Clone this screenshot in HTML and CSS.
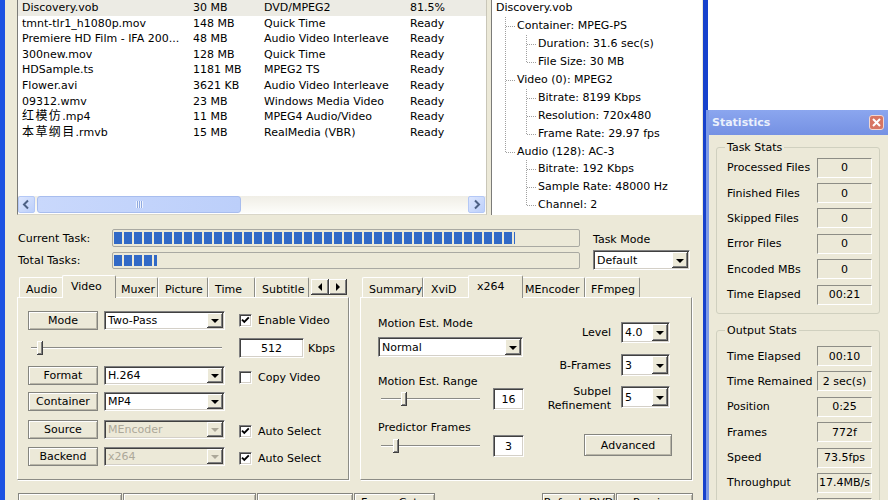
FILE: index.html
```html
<!DOCTYPE html>
<html>
<head>
<meta charset="utf-8">
<link rel="stylesheet" href="styles.css">
</head>
<body>
<div class="main">
  <div class="top">
    <div class="list">
      <div class="rows">
        <div class="row sel"><span class="c1">Discovery.vob</span><span class="c2">30 MB</span><span class="c3">DVD/MPEG2</span><span class="c4">81.5%</span></div>
        <div class="row"><span class="c1">tmnt-tlr1_h1080p.mov</span><span class="c2">148 MB</span><span class="c3">Quick Time</span><span class="c4">Ready</span></div>
        <div class="row"><span class="c1">Premiere HD Film - IFA 200...</span><span class="c2">48 MB</span><span class="c3">Audio Video Interleave</span><span class="c4">Ready</span></div>
        <div class="row"><span class="c1">300new.mov</span><span class="c2">128 MB</span><span class="c3">Quick Time</span><span class="c4">Ready</span></div>
        <div class="row"><span class="c1">HDSample.ts</span><span class="c2">1181 MB</span><span class="c3">MPEG2 TS</span><span class="c4">Ready</span></div>
        <div class="row"><span class="c1">Flower.avi</span><span class="c2">3621 KB</span><span class="c3">Audio Video Interleave</span><span class="c4">Ready</span></div>
        <div class="row"><span class="c1">09312.wmv</span><span class="c2">23 MB</span><span class="c3">Windows Media Video</span><span class="c4">Ready</span></div>
        <div class="row"><span class="c1"><span class="cjk">红模仿</span>.mp4</span><span class="c2">11 MB</span><span class="c3">MPEG4 Audio/Video</span><span class="c4">Ready</span></div>
        <div class="row"><span class="c1"><span class="cjk">本草纲目</span>.rmvb</span><span class="c2">15 MB</span><span class="c3">RealMedia (VBR)</span><span class="c4">Ready</span></div>
      </div>
      <div class="hscroll">
        <span class="sbtn"><svg width="15" height="15" viewBox="0 0 15 15"><path d="M9 3.5 L5 7.5 L9 11.5" fill="none" stroke="#4d6185" stroke-width="2"/></svg></span>
        <span class="thumb"><span class="grip"></span></span>
        <span class="spacer"></span>
        <span class="sbtn"><svg width="15" height="15" viewBox="0 0 15 15"><path d="M6 3.5 L10 7.5 L6 11.5" fill="none" stroke="#4d6185" stroke-width="2"/></svg></span>
      </div>
    </div>
    <div class="tree">
      <div class="tree-inner">
        <div class="trow"><span class="tt">Discovery.vob</span></div>
        <div class="trow"><span class="g tee"></span><span class="tt">Container: MPEG-PS</span></div>
        <div class="trow"><span class="g pipe"></span><span class="g tee"></span><span class="tt">Duration: 31.6 sec(s)</span></div>
        <div class="trow"><span class="g pipe"></span><span class="g ell"></span><span class="tt">File Size: 30 MB</span></div>
        <div class="trow"><span class="g tee"></span><span class="tt">Video (0): MPEG2</span></div>
        <div class="trow"><span class="g pipe"></span><span class="g tee"></span><span class="tt">Bitrate: 8199 Kbps</span></div>
        <div class="trow"><span class="g pipe"></span><span class="g tee"></span><span class="tt">Resolution: 720x480</span></div>
        <div class="trow"><span class="g pipe"></span><span class="g ell"></span><span class="tt">Frame Rate: 29.97 fps</span></div>
        <div class="trow"><span class="g ell"></span><span class="tt">Audio (128): AC-3</span></div>
        <div class="trow"><span class="g"></span><span class="g tee"></span><span class="tt">Bitrate: 192 Kbps</span></div>
        <div class="trow"><span class="g"></span><span class="g tee"></span><span class="tt">Sample Rate: 48000 Hz</span></div>
        <div class="trow"><span class="g"></span><span class="g ell"></span><span class="tt">Channel: 2</span></div>
      </div>
    </div>
  </div>

  <div class="prog">
    <span class="plabel">Current Task:</span>
    <div class="bar"><div class="fill" style="width:401px"></div></div>
    <span></span>
    <span class="modelabel">Task Mode</span>
    <span class="plabel">Total Tasks:</span>
    <div class="bar"><div class="fill" style="width:43px"></div></div>
    <span></span>
    <div class="combo modecombo"><span class="ctext">Default</span><span class="arr"><i class="tri"></i></span></div>
  </div>

  <div class="tabs">
    <div class="tgroup">
      <div class="tstrip">
        <span class="tab w-audio">Audio</span>
        <span class="tab on w-video">Video</span>
        <span class="tab w-muxer">Muxer</span>
        <span class="tab w-picture">Picture</span>
        <span class="tab w-time">Time</span>
        <span class="tab w-subtitle">Subtitle</span>
        <span class="tscroll"><span class="tsbtn"><i class="tl"></i></span><span class="tsbtn"><i class="tr"></i></span></span>
      </div>
      <div class="panel lpanel">
        <div class="frow">
          <span class="btn fbtn">Mode</span>
          <div class="combo fcombo"><span class="ctext">Two-Pass</span><span class="arr"><i class="tri"></i></span></div>
          <span class="chkwrap"><span class="chk"><svg width="11" height="11" viewBox="0 0 11 11"><path d="M2 4.6 L4.3 6.9 L8.8 2.4" fill="none" stroke="#000" stroke-width="1.9"/></svg></span>Enable Video</span>
        </div>
        <div class="frow srow2">
          <div class="slider lslider"><span class="sthumb"></span></div>
          <span class="edit kbps">512</span><span class="unit">Kbps</span>
        </div>
        <div class="frow r3">
          <span class="btn fbtn">Format</span>
          <div class="combo fcombo"><span class="ctext">H.264</span><span class="arr"><i class="tri"></i></span></div>
          <span class="chkwrap low"><span class="chk"></span>Copy Video</span>
        </div>
        <div class="frow r4">
          <span class="btn fbtn">Container</span>
          <div class="combo fcombo"><span class="ctext">MP4</span><span class="arr"><i class="tri"></i></span></div>
        </div>
        <div class="frow r5">
          <span class="btn fbtn">Source</span>
          <div class="combo fcombo dis"><span class="ctext">MEncoder</span><span class="arr"><i class="tri"></i></span></div>
          <span class="chkwrap low"><span class="chk"><svg width="11" height="11" viewBox="0 0 11 11"><path d="M2 4.6 L4.3 6.9 L8.8 2.4" fill="none" stroke="#000" stroke-width="1.9"/></svg></span>Auto Select</span>
        </div>
        <div class="frow r6">
          <span class="btn fbtn">Backend</span>
          <div class="combo fcombo dis"><span class="ctext">x264</span><span class="arr"><i class="tri"></i></span></div>
          <span class="chkwrap low"><span class="chk"><svg width="11" height="11" viewBox="0 0 11 11"><path d="M2 4.6 L4.3 6.9 L8.8 2.4" fill="none" stroke="#000" stroke-width="1.9"/></svg></span>Auto Select</span>
        </div>
      </div>
    </div>

    <div class="tgroup">
      <div class="tstrip">
        <span class="tab w-summary">Summary</span>
        <span class="tab w-xvid">XviD</span>
        <span class="tab on w-x264">x264</span>
        <span class="tab w-mencoder">MEncoder</span>
        <span class="tab w-ffmpeg">FFmpeg</span>
      </div>
      <div class="panel rpanel">
        <div class="rleft">
          <span class="lbl l1">Motion Est. Mode</span>
          <div class="combo mcombo"><span class="ctext">Normal</span><span class="arr"><i class="tri"></i></span></div>
          <span class="lbl l2">Motion Est. Range</span>
          <div class="srow sr1">
            <div class="slider rslider"><span class="sthumb t16"></span></div>
            <span class="edit small">16</span>
          </div>
          <span class="lbl l3">Predictor Frames</span>
          <div class="srow sr2">
            <div class="slider rslider"><span class="sthumb t3"></span></div>
            <span class="edit small">3</span>
          </div>
        </div>
        <div class="rright">
          <div class="prow p1"><span class="plbl">Level</span><div class="combo scombo"><span class="ctext">4.0</span><span class="arr"><i class="tri"></i></span></div></div>
          <div class="prow p2"><span class="plbl">B-Frames</span><div class="combo scombo"><span class="ctext">3</span><span class="arr"><i class="tri"></i></span></div></div>
          <div class="prow p3"><span class="plbl two">Subpel<br>Refinement</span><div class="combo scombo"><span class="ctext">5</span><span class="arr"><i class="tri"></i></span></div></div>
          <span class="btn advbtn">Advanced</span>
        </div>
      </div>
    </div>
  </div>

  <div class="bottom">
    <span class="btn bb b1"></span>
    <span class="btn bb b2"></span>
    <span class="btn bb b3"></span>
    <span class="btn bb b4">Frame Cut...</span>
    <span class="bspacer"></span>
    <span class="btn bb b5">Refresh DVD</span>
    <span class="btn bb b6">Preview</span>
  </div>
</div>

<div class="stats">
  <div class="title"><span class="ttext">Statistics</span><span class="close"><svg width="9" height="9" viewBox="0 0 9 9"><path d="M1 1 L8 8 M8 1 L1 8" stroke="#fff" stroke-width="2"/></svg></span></div>
  <div class="sbody">
    <fieldset class="grp g1">
      <legend>Task Stats</legend>
      <div class="st"><span class="sl">Processed Files</span><span class="sv">0</span></div>
      <div class="st"><span class="sl">Finished Files</span><span class="sv">0</span></div>
      <div class="st"><span class="sl">Skipped Files</span><span class="sv">0</span></div>
      <div class="st"><span class="sl">Error Files</span><span class="sv">0</span></div>
      <div class="st"><span class="sl">Encoded MBs</span><span class="sv">0</span></div>
      <div class="st"><span class="sl">Time Elapsed</span><span class="sv">00:21</span></div>
    </fieldset>
    <fieldset class="grp g2">
      <legend>Output Stats</legend>
      <div class="st"><span class="sl">Time Elapsed</span><span class="sv">00:10</span></div>
      <div class="st"><span class="sl">Time Remained</span><span class="sv">2 sec(s)</span></div>
      <div class="st"><span class="sl">Position</span><span class="sv">0:25</span></div>
      <div class="st"><span class="sl">Frames</span><span class="sv">772f</span></div>
      <div class="st"><span class="sl">Speed</span><span class="sv">73.5fps</span></div>
      <div class="st"><span class="sl">Throughput</span><span class="sv">17.4MB/s</span></div>
      <div class="st"><span class="sl">Bitrate</span><span class="sv">512</span></div>
    </fieldset>
  </div>
</div>
</body>
</html>
```

FILE: styles.css
```css
* { box-sizing: border-box; }

body {
  margin: 0;
  width: 888px;
  height: 500px;
  overflow: hidden;
  background: #fff;
  font-family: "DejaVu Sans", "Noto Sans CJK SC", sans-serif;
  font-size: 11px;
  color: #000;
  position: relative;
}

.main {
  width: 708px;
  height: 500px;
  background: #ece9d8;
  border-left: 5px solid #1c52e2;
  border-right: 5px solid #1742cc;
  overflow: hidden;
}

/* ---------- top: list + tree ---------- */
.top {
  display: flex;
  height: 215px;
  padding-left: 12px;
}

.list {
  width: 470px;
  height: 215px;
  background: #fff;
  border-left: 1px solid #7b7b78;
  border-right: 1px solid #c9c6b8;
  border-bottom: 1px solid #d9d6c9;
  display: flex;
  flex-direction: column;
}

.rows { flex: 1; }

.row {
  display: flex;
  height: 15.6px;
  line-height: 15.6px;
  white-space: nowrap;
}
.row.sel { background: #ecebe4; }
.c1 { width: 175px; padding-left: 4px; flex: none; }
.c2 { width: 71px; flex: none; }
.c3 { width: 146px; flex: none; }
.cjk {
  font-family: "Noto Sans CJK SC", sans-serif;
  font-size: 12px;
  line-height: 12px;
  letter-spacing: 1.4px;
}

.hscroll {
  height: 17px;
  display: flex;
  background: linear-gradient(#f0eee6, #fdfdfa);
  padding-right: 1px;
  margin-bottom: 1px;
}
.sbtn {
  width: 17px;
  height: 17px;
  flex: none;
  border: 1px solid #b4c8f6;
  border-radius: 2px;
  background: linear-gradient(135deg, #dce6fe, #bccffa);
  display: flex;
  align-items: center;
  justify-content: center;
}
.thumb {
  width: 204px;
  margin-left: 2px;
  flex: none;
  border: 1px solid #a8bdee;
  border-radius: 3px;
  background: linear-gradient(90deg, #c9d8fc, #bccffa);
  display: flex;
  align-items: center;
  justify-content: center;
}
.grip {
  width: 7px;
  height: 7px;
  background: repeating-linear-gradient(90deg, #eef3fe 0 1px, #8fa9e0 1px 2px);
}
.spacer { flex: 1; }

.tree {
  width: 211px;
  margin-left: 4px;
  height: 215px;
  background: #fff;
  border-left: 1px solid #7b7b78;
  padding-left: 4px;
  overflow: hidden;
}
.tree-inner { margin-top: -1px; }
.trow {
  display: flex;
  height: 17.95px;
  line-height: 17.95px;
  white-space: nowrap;
}
.g { width: 21px; flex: none; }
.pipe {
  background: repeating-linear-gradient(to bottom, #a0a0a0 0 1px, transparent 1px 2px) 9px 0 / 1px 100% no-repeat;
}
.tee {
  background:
    repeating-linear-gradient(to bottom, #a0a0a0 0 1px, transparent 1px 2px) 9px 0 / 1px 100% no-repeat,
    repeating-linear-gradient(to right, #a0a0a0 0 1px, transparent 1px 2px) 10px 9px / 10px 1px no-repeat;
}
.ell {
  background:
    repeating-linear-gradient(to bottom, #a0a0a0 0 1px, transparent 1px 2px) 9px 0 / 1px 9px no-repeat,
    repeating-linear-gradient(to right, #a0a0a0 0 1px, transparent 1px 2px) 10px 9px / 10px 1px no-repeat;
}

/* ---------- progress ---------- */
.prog {
  display: grid;
  grid-template-columns: 94px 468px 13px 97px;
  grid-template-rows: 18px 17px;
  row-gap: 5px;
  margin-top: 14px;
  padding-left: 13px;
}
.plabel { align-self: center; }
.bar {
  border: 1px solid #a9a9a2;
  border-radius: 2px;
  background: #ece9d8;
  padding: 2px 1px;
}
.fill {
  height: 100%;
  background: repeating-linear-gradient(to right, #3169c6 0 8px, transparent 8px 10px);
}
.modelabel { align-self: end; line-height: 13px; padding-bottom: 1px; }
.modecombo { height: 20px; margin-top: -2px; }

/* ---------- generic widgets ---------- */
.combo {
  display: flex;
  align-items: stretch;
  background: #fff;
  border: 1px solid;
  border-color: #808080 #fff #fff #808080;
  box-shadow: inset 1px 1px #404040, inset -1px -1px #d4d0c8;
  padding: 1px;
}
.ctext {
  flex: 1;
  padding-left: 2px;
  display: flex;
  align-items: center;
  white-space: nowrap;
  overflow: hidden;
}
.arr {
  width: 16px;
  flex: none;
  background: #ece9d8;
  box-shadow: inset -1px -1px #404040, inset 1px 1px #fff, inset -2px -2px #808080;
  display: flex;
  align-items: center;
  justify-content: center;
}
.tri {
  width: 0;
  height: 0;
  border-left: 4px solid transparent;
  border-right: 4px solid transparent;
  border-top: 4px solid #000;
  margin: 1px 1px 0 0;
}
.combo.dis { background: #ece9d8; }
.combo.dis .ctext { color: #aca899; }
.combo.dis .tri { border-top-color: #aca899; }

.btn {
  display: flex;
  align-items: center;
  justify-content: center;
  background: #ece9d8;
  border: 1px solid #85857f;
  box-shadow: inset 1px 1px #fff, inset -1px -1px #b9b6a8;
  white-space: nowrap;
}

.chkwrap {
  display: flex;
  align-items: center;
  margin-left: 14px;
  white-space: nowrap;
}
.chk {
  width: 13px;
  height: 13px;
  flex: none;
  background: #fff;
  border: 1px solid;
  border-color: #808080 #fff #fff #808080;
  box-shadow: inset 1px 1px #404040, inset -1px -1px #d4d0c8;
  margin-right: 6px;
  display: flex;
  align-items: center;
  justify-content: center;
}
.low { margin-top: 3px; }

.edit {
  display: flex;
  align-items: center;
  justify-content: center;
  background: #fff;
  border: 1px solid;
  border-color: #808080 #fff #fff #808080;
  box-shadow: inset 1px 1px #404040, inset -1px -1px #d4d0c8;
}

.slider {
  height: 20px;
  display: flex;
  align-items: center;
  background:
    linear-gradient(#8a8a86, #8a8a86) 3px 9px / calc(100% - 6px) 1px no-repeat,
    linear-gradient(#fff, #fff) 3px 10px / calc(100% - 6px) 1px no-repeat;
}
.sthumb {
  width: 6px;
  height: 14px;
  background: #ece9d8;
  box-shadow: inset -1px -1px #404040, inset 1px 1px #fff, inset -2px -2px #808080;
}

/* ---------- tabs ---------- */
.tabs {
  display: flex;
  padding-left: 12px;
  margin-top: 6px;
  gap: 11px;
}
.tgroup {
  width: 332px;
  display: flex;
  flex-direction: column;
}
.tstrip {
  display: flex;
  height: 22px;
  align-items: flex-end;
  padding-left: 2px;
}
.tab {
  height: 20px;
  flex: none;
  border-top: 1px solid #fff;
  border-left: 1px solid #fff;
  border-right: 1px solid #8c8c86;
  border-radius: 2px 2px 0 0;
  padding: 5px 0 0 6px;
  line-height: 13px;
  white-space: nowrap;
}
.tab.on {
  height: 23px;
  margin: 0 -2px -1px -2px;
  padding: 4px 0 0 8px;
  background: #ece9d8;
  position: relative;
  z-index: 1;
}
.w-audio { width: 45px; }
.w-video { width: 54px; }
.w-muxer { width: 44px; }
.w-picture { width: 50px; }
.w-time { width: 47px; }
.w-subtitle { width: 54px; }
.w-summary { width: 61px; }
.w-xvid { width: 47px; padding-left: 7px; }
.w-x264 { width: 55px; }
.w-mencoder { width: 64px; padding-left: 3px; }
.w-ffmpeg { width: 55px; padding-left: 5px; }

.tscroll {
  display: flex;
  margin-left: 2px;
  margin-bottom: 2px;
  height: 16px;
}
.tsbtn {
  width: 18px;
  height: 16px;
  background: #ece9d8;
  box-shadow: inset -1px -1px #404040, inset 1px 1px #fff, inset -2px -2px #808080;
  display: flex;
  align-items: center;
  justify-content: center;
}
.tl { width: 0; height: 0; border-top: 4px solid transparent; border-bottom: 4px solid transparent; border-right: 4px solid #000; }
.tr { width: 0; height: 0; border-top: 4px solid transparent; border-bottom: 4px solid transparent; border-left: 4px solid #000; }

.panel {
  height: 183px;
  border: 1px solid;
  border-color: #fff #8c8c86 #8c8c86 #fff;
  box-shadow: 1px 1px 0 #fff;
}

/* left panel */
.lpanel {
  padding: 13px 0 0 10px;
  display: flex;
  flex-direction: column;
}
.frow {
  display: flex;
  align-items: center;
  height: 19px;
}
.fbtn { width: 70px; height: 19px; }
.fcombo { width: 121px; height: 19px; margin-left: 6px; }
.srow2 { height: 20px; margin-top: 8px; }
.lslider { width: 197px; padding-left: 9px; }
.kbps { width: 65px; height: 20px; margin-left: 14px; }
.unit { margin-left: 4px; }
.r3 { margin-top: 8px; }
.r4 { margin-top: 7px; }
.r5 { margin-top: 9px; }
.r6 { margin-top: 8px; }

/* right panel */
.rpanel {
  display: flex;
  padding-left: 17px;
}
.rleft {
  width: 146px;
  display: flex;
  flex-direction: column;
}
.lbl { line-height: 13px; }
.l1 { margin-top: 19px; }
.mcombo { width: 145px; height: 20px; margin-top: 7px; }
.l2 { margin-top: 18px; }
.srow { display: flex; align-items: center; height: 22px; }
.sr1 { margin-top: 0; }
.sr2 { margin-top: 1px; }
.rslider { width: 105px; }
.t16 { margin-left: 23px; }
.t3 { margin-left: 15px; }
.edit.small { width: 31px; height: 22px; margin-left: 10px; }
.l3 { margin-top: 11px; }

.rright {
  width: 132px;
  margin-left: 16px;
  display: flex;
  flex-direction: column;
  padding-top: 24px;
}
.prow {
  display: flex;
  align-items: center;
  height: 21px;
}
.p2 { margin-top: 11px; height: 22px; }
.p3 { margin-top: 10px; height: 22px; }
.plbl { flex: 1; text-align: right; }
.plbl.two { line-height: 14px; margin-top: 3px; }
.scombo { width: 49px; height: 100%; margin-left: 10px; margin-right: 2px; }
.advbtn { width: 88px; height: 22px; margin-top: 26px; align-self: flex-end; }

/* bottom buttons */
.bottom {
  display: flex;
  margin-top: 13px;
  padding-left: 13px;
}
.bb { height: 24px; align-items: flex-start; padding-top: 2px; line-height: 13px; }
.b1 { width: 104px; }
.b2 { width: 133px; margin-left: 1px; }
.b3 { width: 96px; margin-left: 1px; }
.b4 { width: 81px; margin-left: 1px; }
.bspacer { width: 107px; }
.b5 { width: 73px; }
.b6 { width: 77px; margin-left: 1px; }

/* ---------- statistics window ---------- */
.stats {
  position: absolute;
  left: 706px;
  top: 110px;
  width: 182px;
  height: 390px;
  background: #ece9d8;
  border-left: 3px solid #7d9ae6;
  overflow: hidden;
}
.title {
  height: 25px;
  background: linear-gradient(#8ba6ef, #7591e3);
  display: flex;
  align-items: center;
  padding-left: 3px;
}
.ttext {
  color: #eaf0fc;
  font-weight: bold;
  font-size: 11px;
}
.close {
  margin-left: auto;
  margin-right: 4px;
  width: 15px;
  height: 15px;
  border: 1px solid #f2d7d0;
  border-radius: 3px;
  background: #d77563;
  display: flex;
  align-items: center;
  justify-content: center;
}
.sbody { padding: 0 8px 0 7px; }
.grp {
  margin: 6px 0 0;
  border: 1px solid #d0d0bf;
  border-radius: 3px;
  padding: 1px 7px 6px 10px;
  min-width: 0;
}
.grp legend {
  padding: 0 2px;
  margin-left: -2px;
  line-height: 13px;
}
.g2 { margin-top: 10px; padding-top: 6px; }
.st {
  display: flex;
  align-items: center;
  height: 25.4px;
  white-space: nowrap;
}
.sl { flex: 1; }
.sv {
  width: 55px;
  height: 20px;
  flex: none;
  display: flex;
  align-items: center;
  justify-content: center;
  border: 1px solid;
  border-color: #8d8d86 #fff #fff #8d8d86;
}
```
